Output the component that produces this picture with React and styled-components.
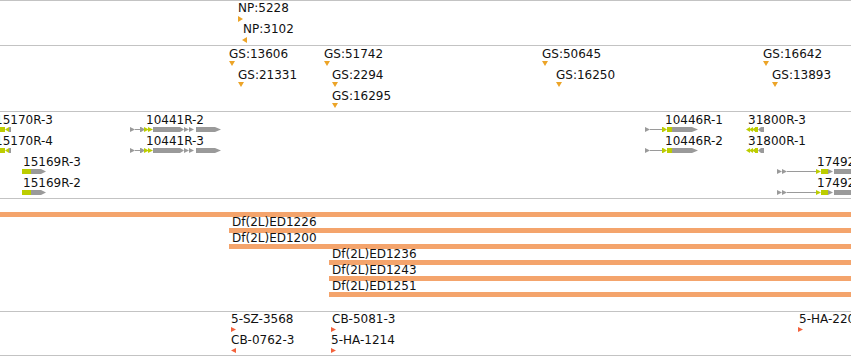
import React from 'react';
import styled, { createGlobalStyle } from 'styled-components';

const Global = createGlobalStyle`
  html, body { margin: 0; padding: 0; background: #fff; overflow: hidden; }
  body { font-family: "DejaVu Sans", Verdana, sans-serif; }
`;

const LINE = '#c3c3c3';
const G = '#9a9a9a';
const Y = '#bccd00';
const ORANGE = '#eca428';
const RED = '#f3623c';
const SANDY = '#f4a46c';

const Panel = styled.div`
  width: 851px;
  display: flex;
  flex-direction: column;
  border-bottom: 1px solid ${LINE};
`;

const Track = styled.section`
  position: relative;
  height: ${p => p.$h}px;
  border-top: 1px solid ${LINE};
  overflow: hidden;
`;

const Feature = styled.div.attrs(p => ({ style: { left: p.$x, top: p.$y } }))`
  position: absolute;
  display: flex;
  flex-direction: column;
  align-items: flex-start;
  gap: ${p => p.$gap}px;
`;

const Label = styled.span`
  display: block;
  margin-left: ${p => p.$indent || 0}px;
  font-size: 12px;
  line-height: ${p => p.$lh || 12}px;
  height: ${p => p.$lh || 12}px;
  white-space: nowrap;
  color: #111;
`;

const Glyph = styled.svg`
  display: block;
  flex: none;
  margin-left: ${p => p.$indent || 0}px;
  overflow: visible;
`;

const DfList = styled.div`
  display: flex;
  flex-direction: column;
  padding-top: 2px;
`;

const DfRow = styled.div`
  display: flex;
  flex-direction: column;
  padding-left: ${p => p.$x}px;
`;

const DfName = styled.span`
  display: block;
  height: 11px;
  line-height: 11px;
  padding-left: 3px;
  font-size: 12px;
  white-space: nowrap;
  color: #111;
`;

const DfBar = styled.div`
  height: 5px;
  background: ${SANDY};
`;

function Tri({ dir, color, w, h, indent }) {
  let pts;
  if (dir === 'r') pts = `0,0 ${w},${h / 2} 0,${h}`;
  else if (dir === 'l') pts = `${w},0 0,${h / 2} ${w},${h}`;
  else pts = `0,0 ${w},0 ${w / 2},${h}`;
  return (
    <Glyph $indent={indent} width={w} height={h} viewBox={`0 0 ${w} ${h}`}>
      <polygon points={pts} fill={color} />
    </Glyph>
  );
}

function GeneModel({ parts, indent }) {
  const x0 = Math.min(...parts.map(p => p[1]));
  const x1 = Math.max(...parts.map(p => p[2]));
  const w = x1 - x0;
  return (
    <Glyph $indent={indent} width={w} height={5} viewBox={`0 0 ${w} 5`}>
      {parts.map(([k, a, b, c], i) => {
        const s = a - x0, e = b - x0;
        if (k === 'bar') return <rect key={i} x={s} y={0} width={e - s} height={5} fill={c} />;
        if (k === 'line') return <rect key={i} x={s} y={2} width={e - s} height={1} fill={c} />;
        if (k === 'r') return <polygon key={i} points={`${s},0 ${e},2.5 ${s},5`} fill={c} />;
        return <polygon key={i} points={`${e},0 ${s},2.5 ${e},5`} fill={c} />;
      })}
    </Glyph>
  );
}

const gene10441 = [
  ['r', 130, 135, G], ['line', 135, 140, G], ['bar', 140, 141, G], ['r', 141, 145, G],
  ['r', 144, 149, Y], ['r', 148, 153, Y], ['bar', 153, 180, G], ['r', 180, 184, G],
  ['r', 184, 189, G], ['r', 189, 194, G], ['bar', 196, 215, G], ['r', 215, 221, G],
];
const gene10446 = [
  ['r', 645, 650, G], ['line', 650, 662, G], ['bar', 662, 663, Y], ['r', 663, 667, Y],
  ['bar', 667, 672, Y], ['bar', 672, 692, G], ['r', 692, 698, G],
];
const gene31800 = [
  ['l', 746, 750, Y], ['l', 749, 753, Y], ['l', 752, 756, Y], ['bar', 755, 758, Y],
  ['l', 758, 761, G], ['bar', 761, 764, G],
];
const gene15170 = [['bar', 0, 5, Y], ['l', 5, 9, Y], ['bar', 9, 11, G]];
const gene15169 = [['bar', 22, 31, Y], ['bar', 31, 41, G], ['r', 41, 46, G]];
const gene17492 = [
  ['r', 777, 782, G], ['r', 782, 787, G], ['line', 787, 816, G], ['r', 816, 821, Y],
  ['bar', 821, 828, Y], ['r', 828, 833, G], ['bar', 834, 851, G],
];

/* [label, labelX, capTop, glyphX, glyph] in page pixels */
const np = [
  ['NP:5228', 238, 3, 238, { dir: 'r', color: ORANGE, w: 5, h: 6 }],
  ['NP:3102', 243, 24, 242, { dir: 'l', color: ORANGE, w: 5, h: 6 }],
];
const gsTri = { dir: 'd', color: ORANGE, w: 6, h: 5 };
const gs = [
  ['GS:13606', 229, 49], ['GS:21331', 238, 70], ['GS:51742', 324, 49], ['GS:2294', 332, 70],
  ['GS:16295', 332, 91], ['GS:50645', 542, 49], ['GS:16250', 556, 70],
  ['GS:16642', 763, 49], ['GS:13893', 772, 70],
].map(([t, x, c]) => [t, x, c, x, gsTri]);
const genes = [
  ['15170R-3', -5, 115, 0, gene15170], ['15170R-4', -5, 136, 0, gene15170],
  ['15169R-3', 23, 157, 22, gene15169], ['15169R-2', 23, 178, 22, gene15169],
  ['10441R-2', 146, 115, 130, gene10441], ['10441R-3', 146, 136, 130, gene10441],
  ['10446R-1', 665, 115, 645, gene10446], ['10446R-2', 665, 136, 645, gene10446],
  ['31800R-3', 748, 115, 746, gene31800], ['31800R-1', 748, 136, 746, gene31800],
  ['17492R-1', 817, 157, 777, gene17492], ['17492R-2', 817, 178, 777, gene17492],
];
const rr = { dir: 'r', color: RED, w: 5, h: 5 };
const rl = { dir: 'l', color: RED, w: 5, h: 5 };
const rna = [
  ['5-SZ-3568', 231, 314, 231, rr], ['CB-0762-3', 231, 335, 231, rl],
  ['CB-5081-3', 332, 314, 331, rr], ['5-HA-1214', 331, 335, 331, rr],
  ['5-HA-2205', 799, 314, 798, rr],
];
const deficiencies = [
  ['', 0], ['Df(2L)ED1226', 229], ['Df(2L)ED1200', 229],
  ['Df(2L)ED1236', 329], ['Df(2L)ED1243', 329], ['Df(2L)ED1251', 329],
];

function FeatureTrack({ top, h, items, gap }) {
  const ct = top + 1;
  return (
    <Track $h={h}>
      {items.map(([text, lx, cap, gx, glyph]) => {
        const left = Math.min(lx, gx);
        return (
          <Feature key={text} $x={left} $y={Math.round(cap - 1.4 - ct)} $gap={gap}>
            <Label $indent={lx - left}>{text}</Label>
            {Array.isArray(glyph)
              ? <GeneModel parts={glyph} indent={gx - left} />
              : <Tri {...glyph} indent={gx - left} />}
          </Feature>
        );
      })}
    </Track>
  );
}

export default function App() {
  return (
    <>
      <Global />
      <Panel>
        <FeatureTrack top={0} h={44} items={np} gap={2} />
        <FeatureTrack top={45} h={65} items={gs} gap={1} />
        <FeatureTrack top={111} h={86} items={genes} gap={1} />
        <Track $h={112}>
          <DfList>
            {deficiencies.map(([name, x], i) => (
              <DfRow key={i} $x={x}>
                <DfName>{name}</DfName>
                <DfBar />
              </DfRow>
            ))}
          </DfList>
        </Track>
        <FeatureTrack top={311} h={43} items={rna} gap={2} />
      </Panel>
    </>
  );
}
